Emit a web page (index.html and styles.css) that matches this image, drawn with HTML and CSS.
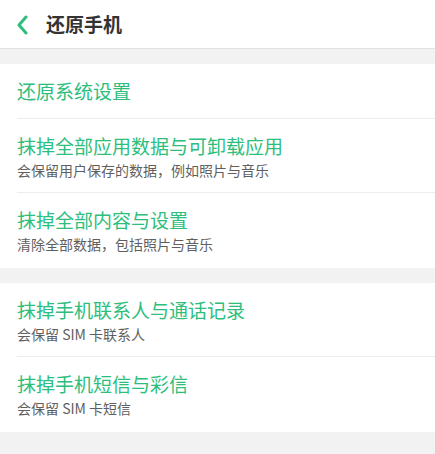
FILE: index.html
```html
<!DOCTYPE html>
<html lang="zh-CN">
<head>
<meta charset="utf-8">
<title>还原手机</title>
<link rel="stylesheet" href="styles.css">
</head>
<body>
<header class="topbar">
  <svg class="back" width="12" height="20" viewBox="0 0 12 20" aria-hidden="true">
    <polyline points="10,2 3,10 10,18" fill="none" stroke="#2dbe7c" stroke-width="3" stroke-linecap="round" stroke-linejoin="round"/>
  </svg>
  <h1 class="title">还原手机</h1>
</header>
<main class="content">
  <section class="group">
    <div class="item item-single">
      <div class="item-title">还原系统设置</div>
    </div>
    <div class="item">
      <div class="item-title">抹掉全部应用数据与可卸载应用</div>
      <div class="item-sub">会保留用户保存的数据，例如照片与音乐</div>
    </div>
    <div class="item">
      <div class="item-title">抹掉全部内容与设置</div>
      <div class="item-sub">清除全部数据，包括照片与音乐</div>
    </div>
  </section>
  <section class="group">
    <div class="item">
      <div class="item-title">抹掉手机联系人与通话记录</div>
      <div class="item-sub">会保留 SIM 卡联系人</div>
    </div>
    <div class="item">
      <div class="item-title">抹掉手机短信与彩信</div>
      <div class="item-sub">会保留 SIM 卡短信</div>
    </div>
  </section>
</main>
</body>
</html>
```
FILE: styles.css
```css
html, body {
  margin: 0;
  padding: 0;
}
body {
  background: #f2f2f2;
  font-family: "Noto Sans CJK SC", "Noto Sans", sans-serif;
  width: 435px;
  height: 454px;
  overflow: hidden;
}
.topbar {
  height: 48px;
  background: #ffffff;
  border-bottom: 1px solid #e2e2e2;
  display: flex;
  align-items: center;
  padding-left: 16px;
}
.back {
  display: block;
  margin-top: 1px;
}
.title {
  margin: 0 0 0 18px;
  font-size: 19px;
  font-weight: 700;
  color: #333333;
  line-height: 26px;
}
.content {
  padding-top: 15px;
  display: flex;
  flex-direction: column;
  gap: 15px;
}
.group {
  background: #ffffff;
  padding-left: 17px;
}
.item {
  padding: 14px 0 12px 0;
  border-bottom: 1px solid #ededed;
}
.item-single {
  padding-bottom: 14px;
}
.item:last-child {
  border-bottom: none;
  padding-bottom: 14px;
}
.item-title {
  font-size: 19px;
  line-height: 26px;
  color: #2dbe7c;
}
.item-sub {
  margin-top: 1px;
  font-size: 14px;
  line-height: 20px;
  color: #5f5f5f;
}
```
